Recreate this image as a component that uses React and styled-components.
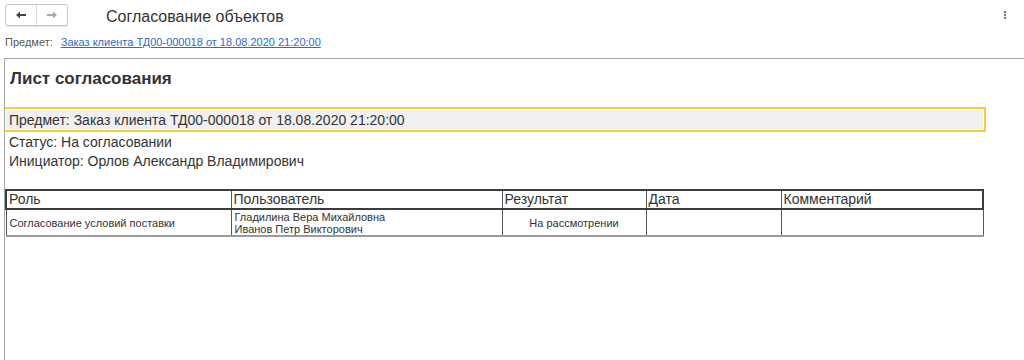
import React from 'react';
import styled, { createGlobalStyle } from 'styled-components';

const GlobalStyle = createGlobalStyle`
  html, body {
    margin: 0;
    padding: 0;
    background: #fff;
    font-family: "Liberation Sans", Arial, sans-serif;
    color: #333;
  }
`;

const Page = styled.div`
  width: 1024px;
  height: 360px;
  display: flex;
  flex-direction: column;
  overflow: hidden;
  background: #fff;
`;

const TopBar = styled.div`
  height: 30px;
  display: flex;
  align-items: center;
  padding: 0 5px;
`;

const NavGroup = styled.div`
  display: flex;
  height: 20px;
  border: 1px solid #c8c8c8;
  border-radius: 3px;
  box-shadow: 0 1px 1px rgba(0, 0, 0, 0.12);
  background: #fff;
`;

const NavButton = styled.div`
  width: 30px;
  display: flex;
  align-items: center;
  justify-content: center;
  color: ${(p) => (p.$muted ? '#a9a9a9' : '#444')};
  & + & {
    border-left: 1px solid #dcdcdc;
  }
`;

const Title = styled.div`
  margin-left: 38px;
  font-size: 16px;
  color: #333;
  margin-top: 3px;
`;

const Kebab = styled.div`
  margin-left: auto;
  margin-right: 13px;
  display: flex;
  flex-direction: column;
  gap: 1px;
  & span {
    width: 2px;
    height: 2px;
    background: #777;
  }
`;

const SubjectLine = styled.div`
  height: 24px;
  display: flex;
  align-items: center;
  padding-left: 5px;
  font-size: 11px;
  gap: 8px;
`;

const SubjectLabel = styled.span`
  color: #5a5a5a;
`;

const SubjectLink = styled.a`
  color: #2d6ac4;
  text-decoration: underline;
  font-size: 11px;
`;

const Panel = styled.div`
  flex: 1;
  margin-top: 4px;
  margin-left: 4px;
  border-top: 1px solid #a6a6a6;
  border-left: 1px solid #a6a6a6;
  display: flex;
  flex-direction: column;
`;

const Heading = styled.div`
  font-size: 17px;
  font-weight: bold;
  color: #333;
  padding: 10px 0 0 5px;
  height: 38px;
  box-sizing: border-box;
`;

const Highlight = styled.div`
  margin-top: 10px;
  width: 981px;
  height: 25px;
  box-sizing: border-box;
  border: 2px solid #f5cd32;
  border-left: none;
  display: flex;
  align-items: center;
  background: #f0f0f0;
  box-shadow: inset 0 0 0 1px #fff;
  padding-left: 4px;
  font-size: 14px;
  color: #333;
`;

const InfoLine = styled.div`
  height: 19px;
  display: flex;
  align-items: center;
  padding-left: 4px;
  font-size: 14px;
  color: #333;
`;

const Table = styled.table`
  margin-top: 19px;
  border-collapse: collapse;
  table-layout: fixed;
  width: 977px;
  font-family: "Liberation Sans", Arial, sans-serif;
`;

const HeadRow = styled.tr`
  height: 19px;
  border: 2px solid #3c3c3c;
`;

const HeadCell = styled.th`
  font-weight: normal;
  font-size: 14px;
  text-align: left;
  padding: 0 2px;
  color: #333;
  border-left: 1px solid #555;
  line-height: 15px;
  white-space: nowrap;
`;

const BodyRow = styled.tr`
  height: 27px;
  border-bottom: 2px solid #9a9a9a;
`;

const Cell = styled.td`
  font-size: 11px;
  color: #333;
  padding: 0 3px;
  vertical-align: middle;
  text-align: ${(p) => (p.$center ? 'center' : 'left')};
  border-left: 1px solid #555;
  border-right: 1px solid #555;
  line-height: 12px;
  white-space: nowrap;
`;

const Arrow = ({ dir }) => (
  <svg width="12" height="10" viewBox="0 0 12 10">
    <g transform={dir === 'right' ? 'scale(-1,1) translate(-12,0)' : undefined}>
      <path d="M1 5 L5 1.5 L5 4 L11 4 L11 6 L5 6 L5 8.5 Z" fill="currentColor" />
    </g>
  </svg>
);

const columns = [
  { title: 'Роль', width: 225 },
  { title: 'Пользователь', width: 271 },
  { title: 'Результат', width: 144 },
  { title: 'Дата', width: 135 },
  { title: 'Комментарий', width: 202 },
];

export default function App() {
  return (
    <Page>
      <GlobalStyle />
      <TopBar>
        <NavGroup>
          <NavButton>
            <Arrow dir="left" />
          </NavButton>
          <NavButton $muted>
            <Arrow dir="right" />
          </NavButton>
        </NavGroup>
        <Title>Согласование объектов</Title>
        <Kebab>
          <span />
          <span />
          <span />
        </Kebab>
      </TopBar>
      <SubjectLine>
        <SubjectLabel>Предмет:</SubjectLabel>
        <SubjectLink href="#">Заказ клиента ТД00-000018 от 18.08.2020 21:20:00</SubjectLink>
      </SubjectLine>
      <Panel>
        <Heading>Лист согласования</Heading>
        <Highlight>Предмет: Заказ клиента ТД00-000018 от 18.08.2020 21:20:00</Highlight>
        <InfoLine>Статус: На согласовании</InfoLine>
        <InfoLine>Инициатор: Орлов Александр Владимирович</InfoLine>
        <Table>
          <colgroup>
            {columns.map((c) => (
              <col key={c.title} style={{ width: c.width }} />
            ))}
          </colgroup>
          <thead>
            <HeadRow>
              {columns.map((c) => (
                <HeadCell key={c.title}>{c.title}</HeadCell>
              ))}
            </HeadRow>
          </thead>
          <tbody>
            <BodyRow>
              <Cell>Согласование условий поставки</Cell>
              <Cell>
                Гладилина Вера Михайловна
                <br />
                Иванов Петр Викторович
              </Cell>
              <Cell $center>На рассмотрении</Cell>
              <Cell />
              <Cell />
            </BodyRow>
          </tbody>
        </Table>
      </Panel>
    </Page>
  );
}
